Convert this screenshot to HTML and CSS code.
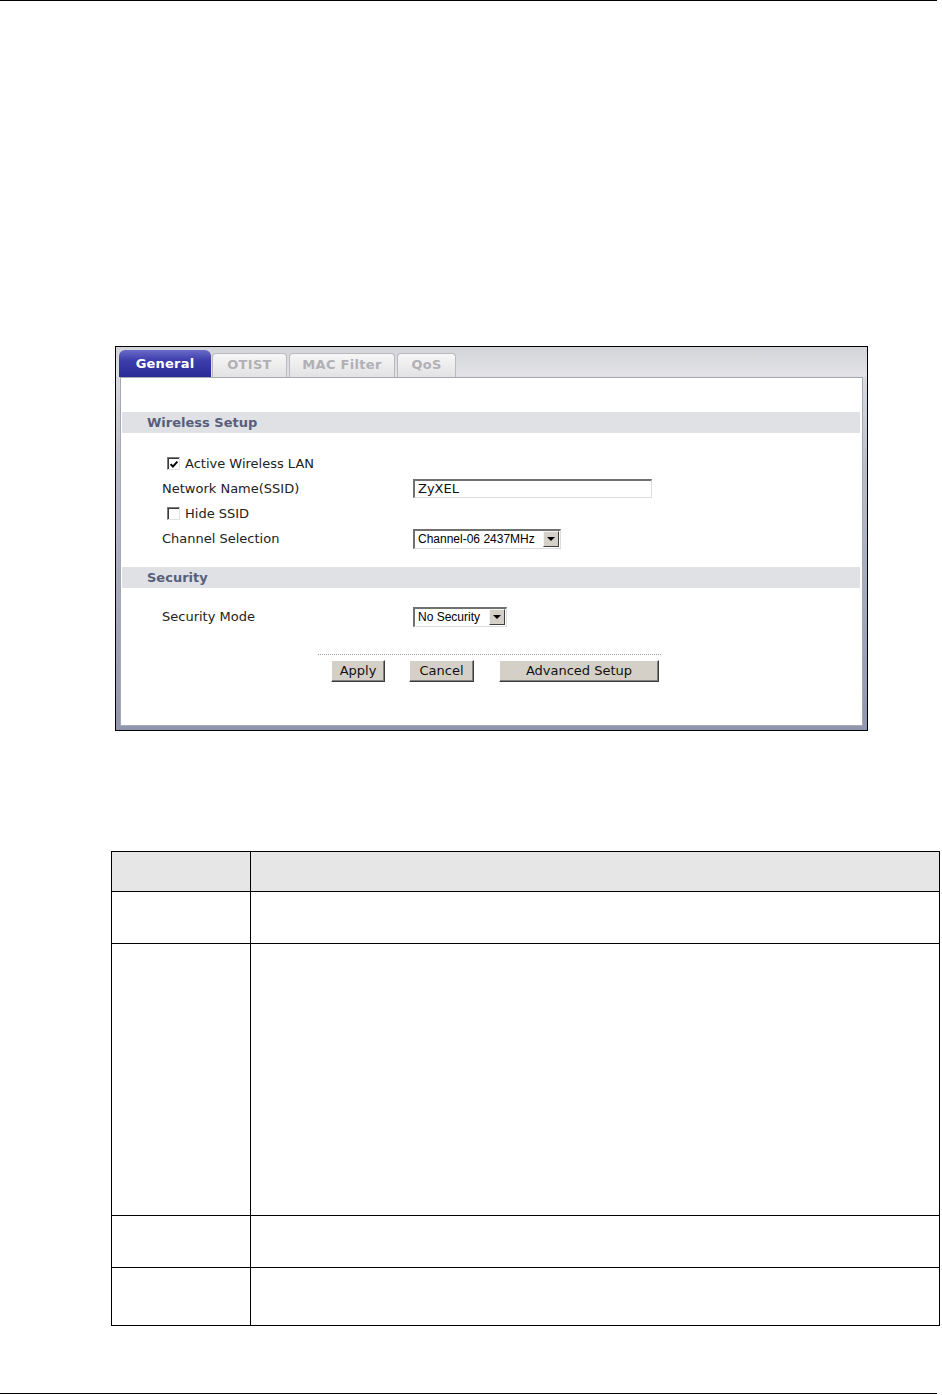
FILE: index.html
```html
<!DOCTYPE html>
<html>
<head>
<meta charset="utf-8">
<link rel="stylesheet" href="styles.css">
</head>
<body>
<div class="page">
  <div class="rule"></div>

  <div class="frame">
    <div class="tabbar">
      <div class="tab active">General</div>
      <div class="tab">OTIST</div>
      <div class="tab">MAC Filter</div>
      <div class="tab">QoS</div>
    </div>
    <div class="panel-wrap">
      <div class="panel">
        <div class="band band-first">Wireless Setup</div>
        <div class="rows rows-first">
          <div class="row">
            <div class="label check-label">
              <span class="checkbox"><svg viewBox="0 0 11 11" width="11" height="11"><path d="M1.8 5 L4.3 7.8 L9.2 2.4" fill="none" stroke="#000" stroke-width="2.2"/></svg></span>
              <span>Active Wireless LAN</span>
            </div>
          </div>
          <div class="row">
            <div class="label">Network Name(SSID)</div>
            <div class="textbox">ZyXEL</div>
          </div>
          <div class="row">
            <div class="label check-label">
              <span class="checkbox"></span>
              <span>Hide SSID</span>
            </div>
          </div>
          <div class="row">
            <div class="label">Channel Selection</div>
            <div class="select select-channel"><span class="select-text">Channel-06 2437MHz</span><span class="select-btn"><span class="arrow"></span></span></div>
          </div>
        </div>
        <div class="band band-second">Security</div>
        <div class="rows rows-second">
          <div class="row">
            <div class="label">Security Mode</div>
            <div class="select select-security"><span class="select-text">No Security</span><span class="select-btn"><span class="arrow"></span></span></div>
          </div>
        </div>
        <div class="actions">
          <div class="dotted"></div>
          <div class="buttons">
            <div class="btn btn-apply">Apply</div>
            <div class="btn btn-cancel">Cancel</div>
            <div class="btn btn-adv">Advanced Setup</div>
          </div>
        </div>
      </div>
    </div>
  </div>

  <table class="desc">
    <tr class="r-head"><td class="c1"></td><td></td></tr>
    <tr class="r-1"><td class="c1"></td><td></td></tr>
    <tr class="r-2"><td class="c1"></td><td></td></tr>
    <tr class="r-3"><td class="c1"></td><td></td></tr>
    <tr class="r-4"><td class="c1"></td><td></td></tr>
  </table>

  <div class="rule rule-bottom"></div>
</div>
</body>
</html>
```

FILE: styles.css
```css
* { box-sizing: border-box; }
html, body { margin: 0; padding: 0; background: #fff; }
body { font-family: "DejaVu Sans", Verdana, sans-serif; }
.page { width: 942px; height: 1395px; overflow: hidden; }

.rule { width: 937px; height: 1px; background: #000; }
.rule-bottom { margin-top: 67px; }

/* screenshot frame */
.frame {
  margin: 345px 0 0 115px;
  width: 753px;
  height: 385px;
  border: 1px solid #000;
  background: linear-gradient(to bottom, #d3d4d9 0, #e3e3e6 29px, #d9dadf 30px, #b9bdca 120px, #9096ad 100%);
  display: flex;
  flex-direction: column;
}
.tabbar {
  height: 30px;
  padding-left: 3px;
  display: flex;
  align-items: flex-end;
}
.tab {
  height: 24px;
  padding: 0 13px;
  margin-left: 2px;
  border: 1px solid #b9b9be;
  border-bottom: none;
  border-radius: 4px 4px 0 0;
  background: linear-gradient(to bottom, #f7f7f7, #e2e2e4);
  color: #b0b0b5;
  font-weight: bold;
  font-size: 13px;
  line-height: 22px;
  letter-spacing: 0.3px;
  text-align: center;
}
.tab.active {
  height: 27px;
  width: 92px;
  padding: 0;
  margin-left: 0;
  border: none;
  border-radius: 6px 6px 0 0;
  background: linear-gradient(to bottom, #6a6ac8 0, #3c3cac 40%, #2a2a95 100%);
  color: #fff;
  line-height: 27px;
  letter-spacing: 0.2px;
}
.tab.active + .tab { margin-left: 1px; width: 75px; padding: 0; }
.tab:nth-child(3) { width: 106px; padding: 0; }
.tab:nth-child(4) { width: 59px; padding: 0; }

.panel-wrap {
  flex: 1;
  padding: 0 4px 4px 4px;
  display: flex;
}
.panel {
  flex: 1;
  background: #fff;
  border: 1px solid #a7a9b2;
  font-size: 13px;
  color: #222;
}

.band {
  height: 21px;
  margin: 0 2px 0 1px;
  padding-left: 25px;
  background: #dfe1e4;
  color: #575e7c;
  font-weight: bold;
  font-size: 13px;
  line-height: 21px;
}
.band-first { margin-top: 34px; }
.band-second { margin-top: 16px; height: 21px; }

.rows { padding-left: 41px; }
.rows-first { margin-top: 18px; }
.rows-second { margin-top: 16px; }
.row {
  height: 25px;
  display: grid;
  grid-template-columns: 251px auto;
  align-items: center;
}
.label { white-space: nowrap; }
.check-label { display: flex; align-items: center; padding-left: 5px; gap: 5px; }
.checkbox {
  width: 13px;
  height: 13px;
  border: 1px solid #7b7b7b;
  border-right-color: #e2e2e2;
  border-bottom-color: #e2e2e2;
  box-shadow: inset 1px 1px 0 #3a3a3a;
  background: #fff;
  display: flex;
  align-items: center;
  justify-content: center;
}
.checkbox svg { display: block; margin: 1px 0 0 1px; }

.textbox {
  width: 239px;
  height: 19px;
  border-top: 2px solid #707070;
  border-left: 2px solid #707070;
  border-right: 1px solid #dcdcdc;
  border-bottom: 1px solid #dcdcdc;
  padding-left: 3px;
  font-size: 13px;
  line-height: 16px;
  color: #111;
}

.select {
  height: 20px;
  display: flex;
  border-top: 2px solid #707070;
  border-left: 2px solid #707070;
  border-right: 1px solid #dcdcdc;
  border-bottom: 1px solid #dcdcdc;
  background: #fff;
  font-family: "Liberation Sans", Arial, sans-serif;
  font-size: 12px;
  color: #000;
}
.select-channel { width: 148px; }
.select-security { width: 94px; }
.select-text { flex: 1; padding-left: 3px; line-height: 17px; white-space: nowrap; }
.select-btn {
  width: 16px;
  height: 16px;
  margin: 0 1px 1px 0;
  background: #d4d0c8;
  border: 1px solid;
  border-color: #f4f4f4 #404040 #404040 #f4f4f4;
  display: flex;
  align-items: center;
  justify-content: center;
}
.arrow {
  width: 0;
  height: 0;
  border-left: 4px solid transparent;
  border-right: 4px solid transparent;
  border-top: 4px solid #000;
}

.actions { margin-top: 25px; padding-left: 197px; }
.dotted { width: 343px; border-top: 1px dotted #9a9a9a; }
.buttons {
  margin-top: 5px;
  padding-left: 13px;
  display: flex;
}
.btn {
  height: 22px;
  background: #d4d0c8;
  border: 1px solid;
  border-color: #ffffff #3c3c3c #3c3c3c #ffffff;
  box-shadow: inset -1px -1px 0 #808080;
  font-size: 13px;
  line-height: 19px;
  text-align: center;
  color: #111;
}
.btn-apply { width: 54px; }
.btn-cancel { width: 65px; margin-left: 24px; }
.btn-adv { width: 160px; margin-left: 25px; }

/* description table */
.desc {
  margin: 120px 0 0 111px;
  width: 829px;
  border-collapse: collapse;
}
.desc td { border: 1px solid #000; padding: 0; }
.desc .c1 { width: 139px; }
.r-head td { background: #e6e6e6; height: 40px; }
.r-1 td { height: 52px; }
.r-2 td { height: 272px; }
.r-3 td { height: 52px; }
.r-4 td { height: 58px; }
```
